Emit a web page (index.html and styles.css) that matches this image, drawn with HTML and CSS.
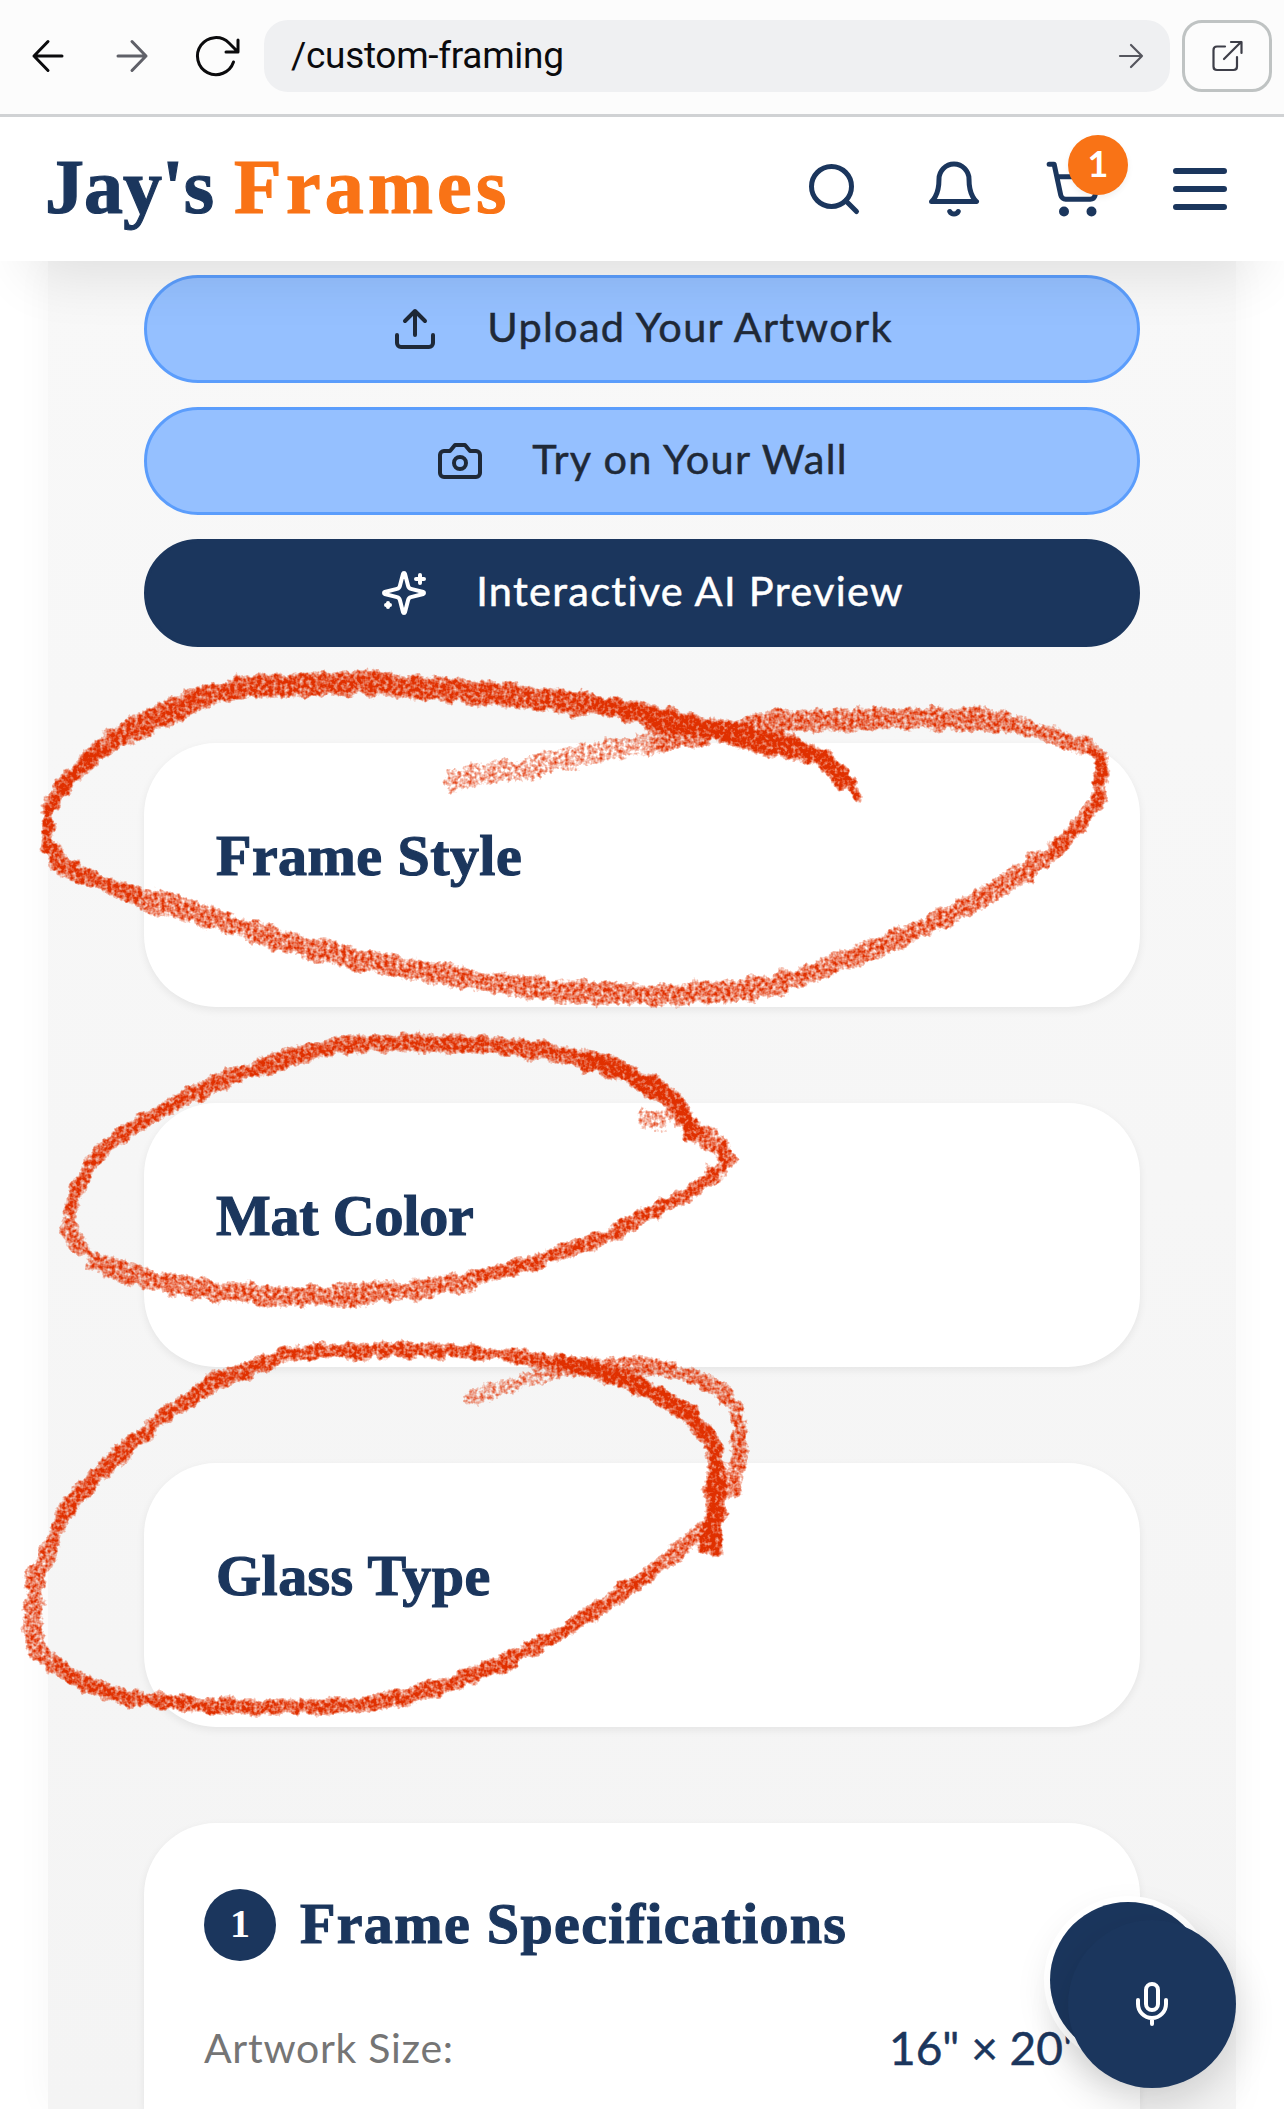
FILE: index.html
```html
<!DOCTYPE html>
<html lang="en">
<head>
<meta charset="utf-8">
<title>Jay's Frames</title>
<link rel="stylesheet" href="styles.css">
</head>
<body>
<div class="toolbar">
  <svg class="tool-icon" viewBox="0 0 48 48"><path d="M38 24H10M24 9.500L10 24l14 14.500"/></svg>
  <svg class="tool-icon tool-muted" viewBox="0 0 48 48"><path d="M10 24h28M24 9.500L38 24L24 38.500"/></svg>
  <svg class="tool-icon tool-reload" viewBox="0 0 48 48"><path d="M41.500 30A18.500 18.500 0 1 1 37 11l8 8M46 8v12H34"/></svg>
  <div class="address"><span class="url">/custom-framing</span>
    <svg class="go" viewBox="0 0 30 30"><path d="M4 15h22M15 4l11 11L15 26"/></svg>
  </div>
  <div class="open"><svg viewBox="0 0 36 36"><path d="M16 8.500H8Q4.500 8.500 4.500 12V28.500Q4.500 32 8 32H24.500Q28 32 28 28.500V19M15 21L32 4M22 4H32.500V15"/></svg></div>
</div>
<header class="header">
  <div class="brand"><span class="brand-a">Jay's</span><span class="brand-b">Frames</span></div>
  <svg class="icon" viewBox="0 0 24 24"><circle cx="11" cy="11" r="8"/><path d="m21 21-4.300-4.300"/></svg>
  <svg class="icon" viewBox="0 0 24 24"><path d="M6 8a6 6 0 0 1 12 0c0 7 3 9 3 9H3s3-2 3-9M10.300 21a1.940 1.940 0 0 0 3.400 0"/></svg>
  <div class="cart">
    <svg class="icon" viewBox="0 0 24 24"><circle cx="8" cy="21" r="1"/><circle cx="19" cy="21" r="1"/><path d="M2.050 2.050h2l2.660 12.420a2 2 0 0 0 2 1.580h9.780a2 2 0 0 0 1.950-1.570l1.650-7.430H5.120"/></svg>
    <span class="badge">1</span>
  </div>
  <svg class="icon menu" viewBox="0 0 24 24"><path d="M4 6h16M4 12h16M4 18h16"/></svg>
</header>
<main class="panel">
  <div class="actions">
    <button class="btn"><svg viewBox="0 0 24 24"><path d="M21 15v4a2 2 0 0 1-2 2H5a2 2 0 0 1-2-2v-4M17 8l-5-5-5 5M12 3v12"/></svg><span>Upload Your Artwork</span></button>
    <button class="btn"><svg viewBox="0 0 24 24"><path d="M14.500 4h-5L7 7H4a2 2 0 0 0-2 2v9a2 2 0 0 0 2 2h16a2 2 0 0 0 2-2V9a2 2 0 0 0-2-2h-3l-2.500-3z"/><circle cx="12" cy="13" r="3"/></svg><span>Try on Your Wall</span></button>
    <button class="btn btn-dark"><svg viewBox="0 0 24 24"><path d="M9.937 15.500A2 2 0 0 0 8.500 14.063l-6.135-1.582a.5.5 0 0 1 0-.962L8.500 9.936A2 2 0 0 0 9.937 8.500l1.582-6.135a.5.5 0 0 1 .963 0L14.063 8.500A2 2 0 0 0 15.500 9.937l6.135 1.581a.5.5 0 0 1 0 .964L15.500 14.063a2 2 0 0 0-1.437 1.437l-1.582 6.135a.5.5 0 0 1-.963 0zM20 3v4M22 5h-4M4 17v2M5 18H3"/></svg><span>Interactive AI Preview</span></button>
  </div>
  <section class="card"><h2>Frame Style</h2></section>
  <section class="card"><h2 class="tight">Mat Color</h2></section>
  <section class="card"><h2>Glass Type</h2></section>
  <section class="card specs">
    <div class="specs-head"><span class="step">1</span><h2 class="wide">Frame Specifications</h2></div>
    <div class="row"><span class="label">Artwork Size:</span><span class="value">16" × 20"</span></div>
  </section>
</main>
<svg class="marks" viewBox="0 0 1284 2109">
  <defs>
    <filter id="crayon" filterUnits="userSpaceOnUse" x="0" y="620" width="1284" height="1140" color-interpolation-filters="sRGB">
      <feTurbulence type="fractalNoise" baseFrequency="0.09" numOctaves="3" seed="4" result="rough"/>
      <feDisplacementMap in="SourceGraphic" in2="rough" scale="15" xChannelSelector="R" yChannelSelector="G" result="edge"/>
      <feGaussianBlur in="edge" stdDeviation="2.300" result="soft"/>
      <feColorMatrix in="soft" type="matrix" values="0 0 0 0 0  0 0 0 0 0  0 0 0 0 0  0 0 0 1 0" result="density"/>
      <feTurbulence type="fractalNoise" baseFrequency="0.26" numOctaves="2" seed="9" result="grain"/>
      <feColorMatrix in="grain" type="matrix" values="0 0 0 0 0  0 0 0 0 0  0 0 0 0 0  0 0 0 1 0" result="grainA"/>
      <feComposite in="density" in2="grainA" operator="arithmetic" k1="0" k2="2" k3="1.700" k4="-1.850" result="wax"/>
      <feFlood flood-color="#e03000"/>
      <feComposite in2="wax" operator="in"/>
      <feGaussianBlur stdDeviation="0.500"/>
    </filter>
  </defs>
  <g filter="url(#crayon)" class="strokes">
    <path class="p1" stroke-width="25" d="M444 781L488 774L532 767L600 751L650 743"/>
    <path class="p2" stroke-width="25" d="M650 743L723 730L784 721L840 720L887 718L940 720L989 720L1020 726"/>
    <path class="p2" stroke-width="20" d="M1020 726L1050 735L1076 744L1091 748"/>
    <path class="p4" stroke-width="13" d="M1091 748L1101 758L1103 770L1101 788"/>
    <path class="p3" stroke-width="17" d="M1101 788L1097 803L1071 835L1048 855"/>
    <path class="p2" stroke-width="23" d="M1048 855L1030 868L977 900L911 933L846 960L790 981"/>
    <path class="p2" stroke-width="25" d="M790 981Q750 990 723 992L661 995L600 993L550 990L503 984L430 973L348 957L287 942L205 916L143 898"/>
    <path class="p3" stroke-width="19" d="M143 898L110 887L82 875L57 863L52 851"/>
    <path class="p5" stroke-width="15" d="M52 851L47 838L47 820L51 802"/>
    <path class="p4" stroke-width="20" d="M51 802L70 778L106 745"/>
    <path class="p3" stroke-width="26" d="M106 745L147 722L196 699L246 686L307 684L368 684L450 690L532 698L590 705"/>
    <path class="p4" stroke-width="24" d="M590 705L625 710L670 720L723 731L764 743L800 751"/>
    <path class="p5" stroke-width="21" d="M800 751Q818 752 837 771L850 786"/>
    <path class="p5" stroke-width="14" d="M850 786L860 800"/>
    <path class="p1" stroke-width="25" d="M637 1118L670 1121"/>
    <path class="p2" stroke-width="22" d="M690 1128L716 1143"/>
    <path class="p3" stroke-width="17" d="M716 1143L730 1157L716 1172L701 1184L652 1213L602 1237L547 1258L477 1279"/>
    <path class="p2" stroke-width="24" d="M477 1279L423 1289L348 1296L274 1297L209 1290L159 1282L119 1270L87 1257"/>
    <path class="p2" stroke-width="19" d="M87 1257L72 1238L69 1215"/>
    <path class="p3" stroke-width="16" d="M69 1215L75 1195L85 1172L104 1148L134 1127L174 1103"/>
    <path class="p3" stroke-width="20" d="M174 1103L224 1080L279 1061L328 1047L373 1043L438 1043L497 1045L557 1054L580 1058"/>
    <path class="p4" stroke-width="23" d="M580 1058L612 1067L640 1080L672 1096"/>
    <path class="p5" stroke-width="20" d="M672 1094L678 1105L693 1140"/>
    <path class="p1" stroke-width="18" d="M463 1401L497 1389L537 1376L587 1365"/>
    <path class="p2" stroke-width="19" d="M587 1365L647 1365L696 1377L720 1390Q736 1401 739 1425L739 1460L730 1498"/>
    <path class="p2" stroke-width="20" d="M704 1525L691 1540L662 1565"/>
    <path class="p3" stroke-width="18" d="M662 1565L607 1603L552 1638L497 1665L438 1688L373 1704L323 1707L259 1707L199 1705L134 1699L95 1688L55 1668"/>
    <path class="p2" stroke-width="22" d="M55 1668L36 1648L32 1620L35 1580L50 1545"/>
    <path class="p3" stroke-width="19" d="M50 1545L65 1512L95 1478L129 1446L169 1413L214 1383L274 1359"/>
    <path class="p3" stroke-width="17" d="M274 1359Q290 1352 323 1351L428 1350L475 1352L522 1357L560 1362"/>
    <path class="p4" stroke-width="19" d="M560 1362L597 1370L652 1390L691 1415L714 1447L716 1475"/>
    <path class="p5" stroke-width="23" d="M716 1475L716 1500L713 1530L711 1556"/>
  </g>
</svg>
<div class="fab fab-back"></div>
<button class="fab fab-mic" aria-label="Voice"><svg viewBox="0 0 24 24"><path d="M12 2a3 3 0 0 0-3 3v7a3 3 0 0 0 6 0V5a3 3 0 0 0-3-3ZM19 10v2a7 7 0 0 1-14 0v-2M12 19v3"/></svg></button>
</body>
</html>
```
FILE: styles.css
```css
* { box-sizing: border-box; }
body { margin: 0; position: relative; height: 2109px; overflow: hidden; background: #fff; font-family: Lato, sans-serif; color: #1b365d; font-variant-ligatures: none; }
svg { fill: none; stroke: currentColor; stroke-linecap: round; stroke-linejoin: round; flex: none; }
button { font: inherit; border: 0; padding: 0; }
h2 { margin: 0; font: 700 58px/81px "Liberation Serif", serif; letter-spacing: .45px; -webkit-text-stroke: 1.2px; white-space: nowrap; }
.tight { letter-spacing: -.2px; }
.wide { letter-spacing: 1.35px; }

.toolbar { height: 117px; padding: 20px 12px 0 24px; display: flex; align-items: flex-start; background: #fcfcfc; border-bottom: 3px solid #d0d2d4; color: #0b0b0d; }
.tool-icon { width: 48px; height: 48px; margin: 12px 36px 0 0; stroke-width: 3; }
.tool-muted { color: #5f6068; }
.tool-reload { margin-right: 24px; }
.address { flex: 1; height: 72px; margin-right: 12px; padding: 0 24px 0 27px; display: flex; align-items: center; justify-content: space-between; border-radius: 24px; background: #eff0f2; }
.url { font: 400 37px/72px Roboto, sans-serif; letter-spacing: -.3px; }
.go { width: 30px; height: 30px; stroke-width: 2.200; color: #55565e; }
.open { width: 90px; height: 72px; display: grid; place-items: center; border: 3px solid #bfc3c3; border-radius: 20px; color: #3d3e48; }
.open svg { width: 36px; height: 36px; stroke-width: 2.200; }

.header { position: relative; z-index: 2; height: 144px; padding: 0 48px 0 45px; display: flex; align-items: center; gap: 60px; background: #fff; box-shadow: 0 42px 60px -30px rgba(0,0,0,.11); }
.brand { flex: 1; padding-bottom: 4px; font: 700 78px/96px "Liberation Serif", serif; -webkit-text-stroke: 1.2px; display: flex; gap: 20px; }
.brand-b { color: #f97316; letter-spacing: 4.2px; }
.icon { width: 60px; height: 60px; stroke-width: 2; display: block; }
.menu { width: 72px; height: 72px; }
.cart { position: relative; }
.badge { position: absolute; left: 24px; top: -24px; width: 60px; height: 60px; border-radius: 50%; background: #f97316; color: #fff; font: 700 36px/57px Lato, sans-serif; text-align: center; box-shadow: 0 3px 6px rgba(0,0,0,.06); }

.panel { margin: 0 48px; padding: 14px 96px 0; height: 1848px; background: linear-gradient(#f8f8f8, #f4f4f4); box-shadow: 0 0 36px rgba(0,0,0,.04); display: flex; flex-direction: column; gap: 96px; }
.actions { display: grid; gap: 24px; }
.btn { height: 108px; display: flex; align-items: center; justify-content: center; gap: 48px; border: 3px solid #5b9dfc; border-radius: 54px; background: #95c0ff; color: #1f2937; font-size: 41.5px; letter-spacing: 1.3px; -webkit-text-stroke: .5px; }
.btn span { padding-bottom: 7px; }
.btn svg { width: 48px; height: 48px; stroke-width: 2; }
.btn-dark { background: #1b365d; border-color: #1b365d; color: #fff; }
.card { height: 264px; flex: none; padding: 72px; background: #fff; border-radius: 72px; box-shadow: 0 3px 9px rgba(0,0,0,.07); }
.specs { padding: 66px 60px 0; height: 286px; border-radius: 72px 72px 0 0; }
.specs-head { display: flex; align-items: center; gap: 24px; height: 72px; }
.specs-head h2 { padding-bottom: 3px; }
.step { width: 72px; height: 72px; border-radius: 50%; background: #1b365d; color: #fff; font: 700 40px/70px "Liberation Serif", serif; text-align: center; }
.row { margin-top: 59px; display: flex; justify-content: space-between; align-items: center; height: 54px; }
.label { font-size: 41px; letter-spacing: .7px; color: #757575; }
.value { font-size: 46px; -webkit-text-stroke: .5px; }

.marks { position: absolute; left: 0; top: 0; width: 1284px; height: 2109px; z-index: 3; pointer-events: none; }
.strokes path { stroke: #000; stroke-linecap: butt; }
.strokes .p1 { stroke-opacity: .68; }
.strokes .p2 { stroke-opacity: .82; }
.strokes .p3 { stroke-opacity: .91; }
.strokes .p4 { stroke-opacity: .98; }
.strokes .p5 { stroke-opacity: 1; }
.fab { position: absolute; border-radius: 50%; background: #1b365d; z-index: 4; }
.fab-back { left: 1050px; top: 1902px; width: 156px; height: 156px; box-shadow: 0 0 0 6px #fff, 0 12px 36px rgba(0,0,0,.1); }
.fab-mic { left: 1068px; top: 1920px; width: 168px; height: 168px; display: grid; place-items: center; color: #fff; box-shadow: 0 15px 40px rgba(0,0,0,.16); }
.fab-mic svg { width: 48px; height: 48px; stroke-width: 2; }
```
